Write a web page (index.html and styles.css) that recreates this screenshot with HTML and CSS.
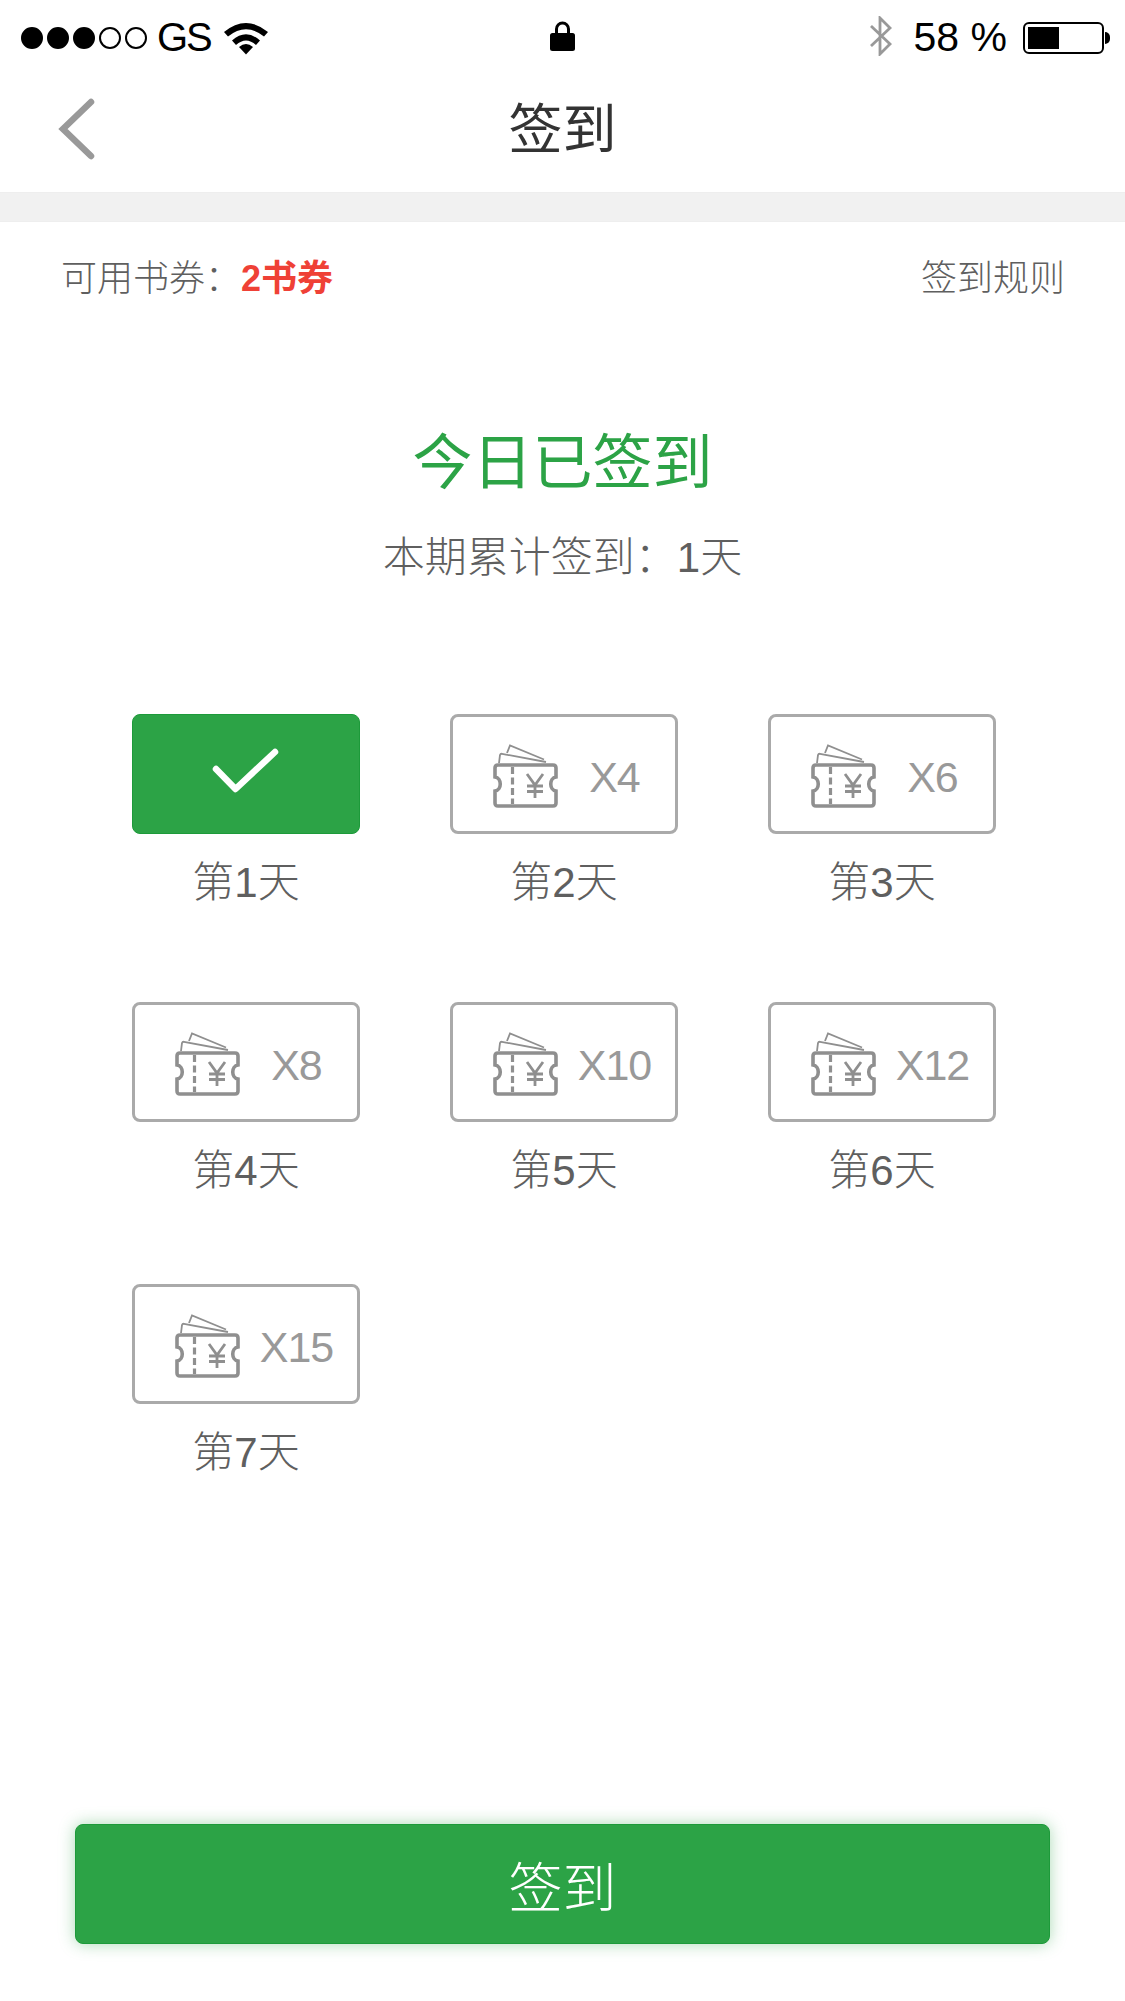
FILE: index.html
```html
<!DOCTYPE html>
<html lang="zh-CN">
<head>
    <meta charset="UTF-8">
    <meta name="viewport" content="width=device-width, initial-scale=1.0">
    <title>签到</title>
    <link rel="stylesheet" href="styles.css">
</head>
<body>
    <svg class="icon-defs" width="0" height="0" aria-hidden="true">
        <symbol id="ticket" viewBox="0 0 65 64">
            <path d="M6 19 L7 11 Q7.500 9.500 9 9.800 L53 18" fill="none" stroke="currentColor" stroke-width="1.800"/>
            <path d="M14 9 L17 1.500 L51 15.500" fill="none" stroke="currentColor" stroke-width="1.800"/>
            <path d="M5 21 H60 Q63 21 63 24 V33 C56 34 56 46 63 47 V59 Q63 62 60 62 H5 Q2 62 2 59 V47 C9 46 9 34 2 33 V24 Q2 21 5 21 Z" fill="none" stroke="currentColor" stroke-width="3.600"/>
            <path d="M19.500 23 V60" fill="none" stroke="currentColor" stroke-width="3.200" stroke-dasharray="7 3.500"/>
            <path d="M34 30 L42 41 L50 30 M42 41 V54 M34 42 H50 M34 47.500 H50" fill="none" stroke="currentColor" stroke-width="2.800"/>
        </symbol>
    </svg>

    <div class="status-bar">
        <div class="status-left">
            <span class="signal">
                <i class="dot on"></i><i class="dot on"></i><i class="dot on"></i><i class="dot"></i><i class="dot"></i>
            </span>
            <span class="carrier">GS</span>
            <svg class="wifi" viewBox="0 0 46 34">
                <path d="M1 11 Q23 -7 45 11 L41 15.500 Q23 1 5 15.500 Z"/>
                <path d="M9 19.500 Q23 7 37 19.500 L33 24 Q23 15 13 24 Z"/>
                <path d="M16 26 Q23 20 30 26 L23 33.500 Z"/>
            </svg>
        </div>
        <svg class="lock" viewBox="0 0 25 30">
            <path d="M6.500 13 V8 a6 6 0 0 1 12 0 V13" fill="none" stroke="#000" stroke-width="3"/>
            <rect x="0" y="12" width="25" height="18" rx="2.500"/>
        </svg>
        <div class="status-right">
            <svg class="bluetooth" viewBox="0 0 24 40">
                <path d="M2 10 L21 28 L11 38 V2 L21 12 L2 30" fill="none" stroke="#999" stroke-width="2.800"/>
            </svg>
            <span class="battery-text">58 %</span>
            <span class="battery"><i class="battery-level"></i></span>
            <i class="battery-cap"></i>
        </div>
    </div>

    <header class="nav-bar">
        <svg class="back" viewBox="0 0 38 62">
            <path d="M34 4 L6 31 L34 58" fill="none" stroke="#999" stroke-width="6.500" stroke-linecap="round" stroke-linejoin="miter"/>
        </svg>
        <h1 class="nav-title">签到</h1>
    </header>
    <div class="divider"></div>

    <div class="info-row">
        <div>可用书券：<span class="coupons">2书券</span></div>
        <div>签到规则</div>
    </div>

    <section class="summary">
        <h2 class="summary-title">今日已签到</h2>
        <p class="summary-sub">本期累计签到：1天</p>
    </section>

    <div class="days">
        <div class="day">
            <div class="day-box done">
                <svg class="check" viewBox="0 0 68 48">
                    <path d="M4 21 L23.500 41 L63 4" fill="none" stroke="#fff" stroke-width="6.500" stroke-linecap="round" stroke-linejoin="round"/>
                </svg>
            </div>
            <div class="day-label">第1天</div>
        </div>
        <div class="day">
            <div class="day-box"><svg class="ticket"><use href="#ticket"/></svg><span class="reward">X4</span></div>
            <div class="day-label">第2天</div>
        </div>
        <div class="day">
            <div class="day-box"><svg class="ticket"><use href="#ticket"/></svg><span class="reward">X6</span></div>
            <div class="day-label">第3天</div>
        </div>
        <div class="day">
            <div class="day-box"><svg class="ticket"><use href="#ticket"/></svg><span class="reward">X8</span></div>
            <div class="day-label">第4天</div>
        </div>
        <div class="day">
            <div class="day-box"><svg class="ticket"><use href="#ticket"/></svg><span class="reward">X10</span></div>
            <div class="day-label">第5天</div>
        </div>
        <div class="day">
            <div class="day-box"><svg class="ticket"><use href="#ticket"/></svg><span class="reward">X12</span></div>
            <div class="day-label">第6天</div>
        </div>
        <div class="day">
            <div class="day-box"><svg class="ticket"><use href="#ticket"/></svg><span class="reward">X15</span></div>
            <div class="day-label">第7天</div>
        </div>
    </div>

    <button class="sign-button">签到</button>
</body>
</html>
```

FILE: styles.css
```css
* {
    box-sizing: border-box;
}
html, body {
    margin: 0;
    padding: 0;
}
body {
    width: 1125px;
    height: 2001px;
    overflow: hidden;
    background-color: #fff;
    font-family: "Liberation Sans", "Noto Sans CJK SC", sans-serif;
    font-weight: 300;
    color: #5f5f5f;
}
.icon-defs {
    position: absolute;
}

/* status bar */
.status-bar {
    height: 68px;
    padding: 7px 15px 0;
    display: grid;
    grid-template-columns: 1fr auto 1fr;
    align-items: center;
    color: #000;
}
.status-left, .status-right {
    display: flex;
    align-items: center;
}
.status-right {
    justify-content: flex-end;
}
.signal {
    display: flex;
    gap: 4px;
    margin-left: 6px;
}
.dot {
    width: 22px;
    height: 22px;
    border: 2px solid #000;
    border-radius: 50%;
}
.dot.on {
    background-color: #000;
}
.carrier {
    font-size: 40px;
    font-weight: 400;
    letter-spacing: -2px;
    margin-left: 10px;
}
.wifi {
    width: 46px;
    height: 34px;
    margin-left: 12px;
}
.lock {
    width: 25px;
    height: 30px;
    margin-top: -3px;
}
.bluetooth {
    width: 24px;
    height: 40px;
    margin-right: 21px;
    margin-top: -3px;
}
.battery-text {
    font-size: 41px;
    font-weight: 400;
    margin-right: 16px;
}
.battery {
    width: 81px;
    height: 32px;
    padding: 3px;
    border: 2px solid #000;
    border-radius: 6px;
}
.battery-level {
    display: block;
    width: 31px;
    height: 100%;
    background-color: #000;
}
.battery-cap {
    width: 5px;
    height: 12px;
    margin-left: 1px;
    background-color: #000;
    border-radius: 0 6px 6px 0;
}

/* nav */
.nav-bar {
    height: 124px;
    position: relative;
    display: flex;
    align-items: center;
    justify-content: center;
}
.back {
    position: absolute;
    left: 57px;
    top: 30px;
    width: 38px;
    height: 62px;
}
.nav-title {
    margin: 0;
    font-size: 54px;
    font-weight: 400;
    color: #333;
    line-height: 1;
}
.divider {
    height: 30px;
    background-color: #f1f1f1;
    border-top: 1px solid #eee;
    border-bottom: 1px solid #eee;
}

.info-row {
    display: flex;
    justify-content: space-between;
    padding: 0 60px 0 61px;
    margin-top: 32px;
    font-size: 36px;
    line-height: 50px;
}
.coupons {
    color: #ef4136;
    font-weight: 700;
}

.summary {
    margin-top: 120px;
    text-align: center;
}
.summary-title {
    margin: 0;
    font-size: 60px;
    line-height: 80px;
    font-weight: 400;
    color: #2ca346;
}
.summary-sub {
    margin: 24px 0 0;
    font-size: 42px;
    line-height: 60px;
}

/* days */
.days {
    margin-top: 126px;
    padding-left: 132px;
    display: grid;
    grid-template-columns: repeat(3, 228px);
    grid-template-rows: 288px 282px 200px;
    column-gap: 90px;
}
.day-box {
    height: 120px;
    padding: 0 4px 0 40px;
    border: 3px solid #aaa;
    border-radius: 8px;
    display: flex;
    align-items: center;
    color: #999;
}
.day-box.done {
    padding: 0;
    justify-content: center;
    background-color: #2ca346;
    border: 1px solid #1d9a3a;
}
.check {
    width: 68px;
    height: 48px;
    margin-top: -4px;
}
.ticket {
    width: 65px;
    height: 64px;
    flex-shrink: 0;
    margin-top: 3px;
    color: #8f8f8f;
}
.reward {
    flex: 1;
    font-size: 43px;
    font-weight: 400;
    text-align: center;
    margin-top: 6px;
    letter-spacing: -1px;
}
.day-label {
    margin-top: 20px;
    font-size: 42px;
    line-height: 58px;
    text-align: center;
}

/* bottom button */
.sign-button {
    position: absolute;
    left: 75px;
    top: 1824px;
    width: 975px;
    height: 120px;
    background-color: #2ca346;
    border: 1px solid #1d9a3a;
    border-radius: 8px;
    box-shadow: 0 0 16px rgba(44, 163, 70, 0.4);
    color: #fff;
    font-family: inherit;
    font-weight: 300;
    font-size: 54px;
}
```
